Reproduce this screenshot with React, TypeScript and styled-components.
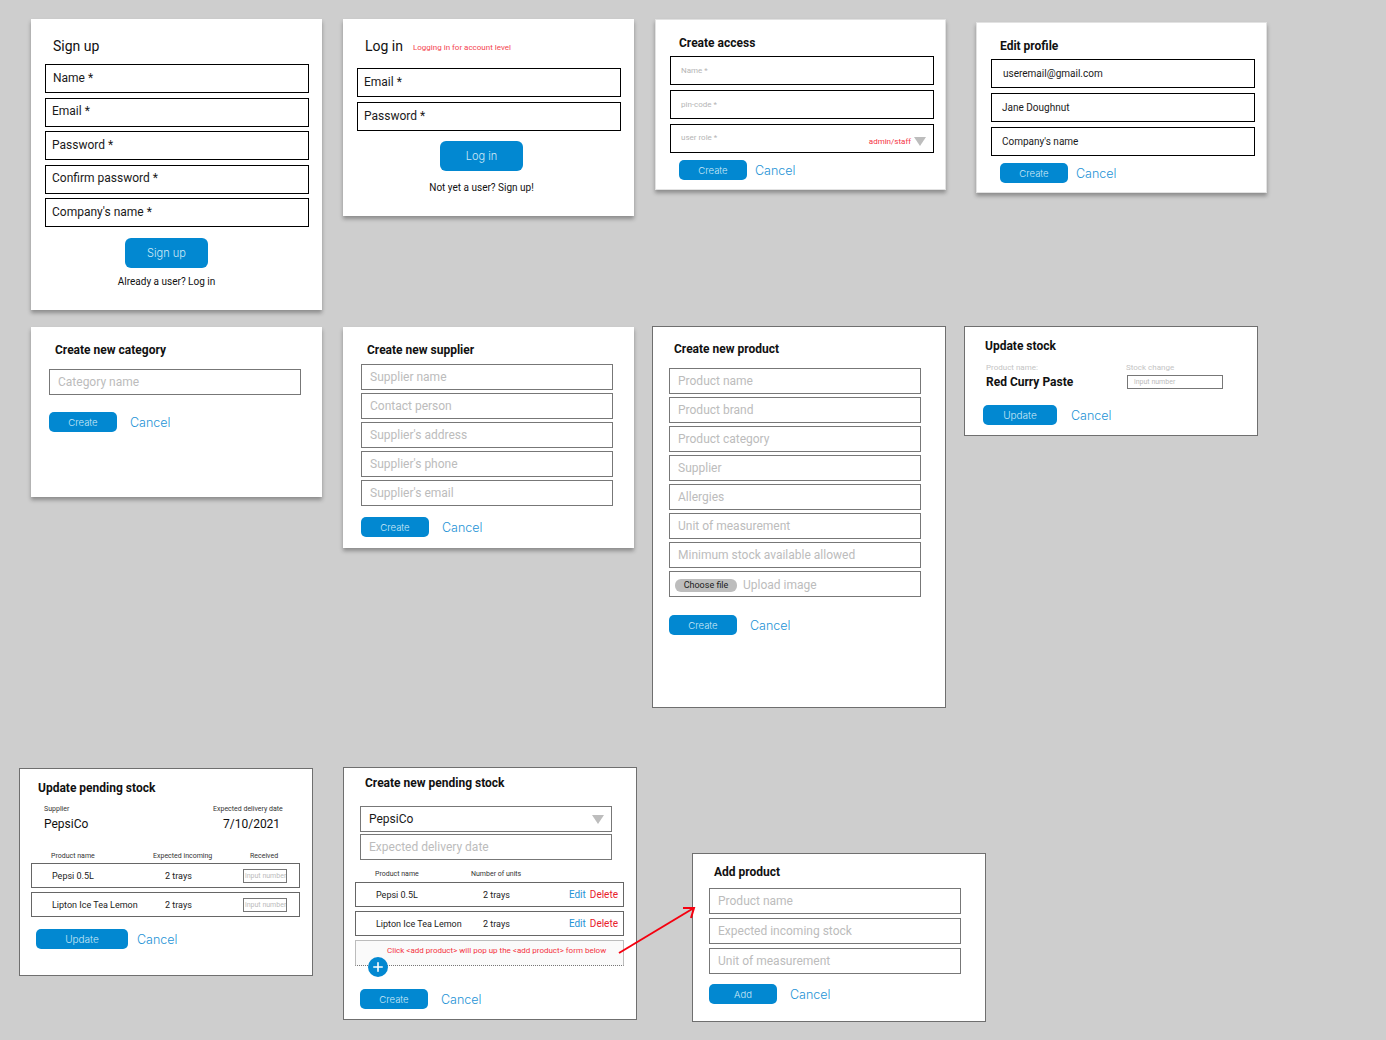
import React from "react";
import styled, { createGlobalStyle } from "styled-components";

const GlobalStyle = createGlobalStyle`
  html, body {
    margin: 0;
    padding: 0;
    background: #cecece;
    font-family: "Roboto", "Liberation Sans", sans-serif;
  }
`;

const Canvas = styled.div`
  position: relative;
  width: 1386px;
  height: 1040px;
  overflow: hidden;
  background: #cecece;
`;

// each card sits on the free wireframe canvas, content inside is plain flow
const Card = styled.section<{
  $x: number;
  $y: number;
  $w: number;
  $h: number;
  $px: number;
  $pt: number;
  $look?: "raised" | "soft" | "flat";
}>`
  position: absolute;
  left: ${(p) => p.$x}px;
  top: ${(p) => p.$y}px;
  width: ${(p) => p.$w}px;
  height: ${(p) => p.$h}px;
  box-sizing: border-box;
  padding: ${(p) => p.$pt}px 0 0 ${(p) => p.$px}px;
  background: #fff;
  display: flex;
  flex-direction: column;
  border: ${(p) =>
    p.$look === "flat" ? "1px solid #6f6f6f" : p.$look === "soft" ? "1px solid #e2e2e2" : "none"};
  box-shadow: ${(p) => (p.$look === "flat" ? "none" : "0 3px 4px rgba(0, 0, 0, 0.32)")};
`;

const TitleRow = styled.div`
  display: flex;
  align-items: baseline;
  gap: 10px;
`;

const Title = styled.h2<{ $ml: number; $big?: boolean }>`
  margin: 0 0 0 ${(p) => p.$ml}px;
  font-size: ${(p) => (p.$big ? "14px" : "12px")};
  font-weight: ${(p) => (p.$big ? 400 : 700)};
  line-height: 16px;
  color: #111;
  white-space: nowrap;
`;

const RedNote = styled.span`
  position: relative;
  top: -1px;
  font-size: 8px;
  color: #f4444f;
`;

const FieldStack = styled.div<{ $mt: number; $gap: number; $w: number; $ml?: number }>`
  display: flex;
  flex-direction: column;
  gap: ${(p) => p.$gap}px;
  width: ${(p) => p.$w}px;
  margin: ${(p) => p.$mt}px 0 0 ${(p) => p.$ml ?? 0}px;
`;

const Field = styled.div<{
  $h?: number;
  $pl?: number;
  $size?: number;
  $tone?: "ink" | "dim" | "faint" | "select";
}>`
  box-sizing: border-box;
  height: ${(p) => p.$h ?? 26}px;
  display: flex;
  align-items: center;
  padding: 0 7px ${(p) => (p.$tone ? 0 : 2)}px ${(p) => p.$pl ?? 8}px;
  background: #fff;
  border: 1px solid ${(p) => (p.$tone === "dim" || p.$tone === "select" ? "#777" : "#000")};
  font-size: ${(p) => p.$size ?? 12}px;
  color: ${(p) => (p.$tone === "dim" ? "#bcbcbc" : p.$tone === "faint" ? "#b5b5b5" : "#1a1a1a")};
  white-space: nowrap;
`;

const ProfileField = styled(Field)`
  padding-bottom: 0;
`;

const FileField = styled(Field)`
  padding-top: 2px;
`;

const RoleField = styled(Field)`
  justify-content: space-between;
`;

const RoleText = styled.span`
  margin-top: -2px;
`;

const RoleChoice = styled.span`
  display: flex;
  align-items: center;
  gap: 3px;
  font-size: 8px;
  color: #f4333f;
  margin-top: 6px;
`;

const Caret = styled.svg`
  display: block;
  width: 12px;
  height: 9px;
  fill: #bdbdbd;
`;

const ChooseFile = styled.span`
  display: inline-flex;
  align-items: center;
  justify-content: center;
  width: 62px;
  height: 13px;
  margin-right: 6px;
  border-radius: 6px;
  background: #bdbdbd;
  font-size: 9px;
  color: #1c1c1c;
`;

const Actions = styled.div<{ $mt: number; $ml?: number; $gap: number }>`
  display: flex;
  align-items: center;
  gap: ${(p) => p.$gap}px;
  margin: ${(p) => p.$mt}px 0 0 ${(p) => p.$ml ?? 0}px;
`;

const PrimaryButton = styled.button<{ $w: number; $h?: number; $size?: number }>`
  box-sizing: border-box;
  width: ${(p) => p.$w}px;
  height: ${(p) => p.$h ?? 20}px;
  padding: 0;
  border: 0;
  border-radius: ${(p) => (p.$h ? 6 : 5)}px;
  background: #0288d1;
  color: #cde8f7;
  font-family: "Inter", "Liberation Sans", sans-serif;
  font-size: ${(p) => p.$size ?? 9.5}px;
  font-weight: 300;
`;

const CancelLink = styled.a`
  margin-top: 1px;
  font-family: "Inter", "Liberation Sans", sans-serif;
  font-size: 12.5px;
  font-weight: 300;
  color: #1e93d6;
`;

const CenterBlock = styled.div<{ $mt: number; $ml: number; $gap: number }>`
  width: 83px;
  margin: ${(p) => p.$mt}px 0 0 ${(p) => p.$ml}px;
  display: flex;
  flex-direction: column;
  align-items: center;
  gap: ${(p) => p.$gap}px;
`;

const Hint = styled.p`
  margin: 0;
  font-size: 10px;
  line-height: 12px;
  color: #111;
  white-space: nowrap;
`;

const MetaRow = styled.div<{ $mt: number; $ml: number; $first: number }>`
  display: grid;
  grid-template-columns: ${(p) => p.$first}px 1fr;
  margin: ${(p) => p.$mt}px 0 0 ${(p) => p.$ml}px;
`;

const MetaLabel = styled.div<{ $faint?: boolean }>`
  font-size: ${(p) => (p.$faint ? 8 : 7)}px;
  line-height: 9px;
  color: ${(p) => (p.$faint ? "#c4c4c4" : "#333")};
  white-space: nowrap;
`;

const MetaValue = styled.div<{ $ml?: number; $mt: number; $strong?: boolean }>`
  margin: ${(p) => p.$mt}px 0 0 ${(p) => p.$ml ?? 0}px;
  font-size: 12px;
  line-height: 16px;
  font-weight: ${(p) => (p.$strong ? 700 : 400)};
  color: #111;
  white-space: nowrap;
`;

const NumberBox = styled.div<{ $w: number; $h: number; $size: number; $pl: number }>`
  box-sizing: border-box;
  width: ${(p) => p.$w}px;
  height: ${(p) => p.$h}px;
  padding-left: ${(p) => p.$pl}px;
  display: flex;
  align-items: center;
  border: 1px solid #777;
  font-size: ${(p) => p.$size}px;
  color: #bbb;
  white-space: nowrap;
  overflow: hidden;
`;

const StockInput = styled(NumberBox)`
  margin: 3px 0 0 1px;
`;

const TableHead = styled.div<{ $cols: string; $mt: number; $pl: number }>`
  display: grid;
  grid-template-columns: ${(p) => p.$cols};
  margin-top: ${(p) => p.$mt}px;
  padding-left: ${(p) => p.$pl}px;
  font-size: 7px;
  line-height: 9px;
  color: #333;
  white-space: nowrap;
`;

const RowStack = styled.div<{ $mt: number }>`
  display: flex;
  flex-direction: column;
  gap: 4px;
  width: 269px;
  margin-top: ${(p) => p.$mt}px;
`;

const TableRow = styled.div<{ $cols: string }>`
  box-sizing: border-box;
  height: 25px;
  display: grid;
  grid-template-columns: ${(p) => p.$cols};
  align-items: center;
  padding-left: 20px;
  background: #fff;
  border: 1px solid #666;
  font-size: 9px;
  color: #222;
  white-space: nowrap;
`;

const RowLinks = styled.div`
  display: flex;
  justify-content: flex-end;
  gap: 4px;
  padding-right: 5px;
  font-size: 10px;
`;

const EditLink = styled.a`
  color: #1e93d6;
`;

const DeleteLink = styled.a`
  color: #e8202c;
`;

const AddBox = styled.div`
  position: relative;
  box-sizing: border-box;
  width: 269px;
  height: 26px;
  margin-top: 4px;
  padding: 5px 0 0 31px;
  background: #fafafa;
  border: 1px solid #bcbcbc;
  border-bottom-style: dotted;
  border-bottom-color: #777;
  font-size: 8px;
  color: #f4333f;
  white-space: nowrap;
`;

const AddButton = styled.span`
  position: absolute;
  left: 12px;
  top: 16px;
  width: 20px;
  height: 20px;
  border-radius: 50%;
  background: #0288d1;
  display: flex;
  align-items: center;
  justify-content: center;
`;

const PlusIcon = styled.svg`
  width: 10px;
  height: 10px;
  stroke: #fff;
  stroke-width: 1.6;
  stroke-linecap: round;
`;

const ArrowLayer = styled.svg`
  position: absolute;
  left: 0;
  top: 0;
  width: 1386px;
  height: 1040px;
  pointer-events: none;
`;

const CaretIcon = () => (
  <Caret viewBox="0 0 12 9">
    <polygon points="0,0 12,0 6,9" />
  </Caret>
);

const FormActions = ({
  label,
  w,
  mt,
  ml,
  gap,
  size,
}: {
  label: string;
  w: number;
  mt: number;
  ml?: number;
  gap: number;
  size?: number;
}) => (
  <Actions $mt={mt} $ml={ml} $gap={gap}>
    <PrimaryButton $w={w} $size={size}>{label}</PrimaryButton>
    <CancelLink>Cancel</CancelLink>
  </Actions>
);

const supplierFields = ["Supplier name", "Contact person", "Supplier's address", "Supplier's phone", "Supplier's email"];

const productFields = [
  "Product name",
  "Product brand",
  "Product category",
  "Supplier",
  "Allergies",
  "Unit of measurement",
  "Minimum stock available allowed",
];

const stockRows = ["Pepsi 0.5L", "Lipton Ice Tea Lemon"];

export default function App() {
  return (
    <Canvas>
      <GlobalStyle />

      <Card $x={31} $y={19} $w={291} $h={291} $px={14} $pt={19}>
        <Title $big $ml={8}>Sign up</Title>
        <FieldStack $mt={10} $gap={4.5} $w={264}>
          <Field $h={29} $pl={7}>Name *</Field>
          {["Email *", "Password *", "Confirm password *", "Company's name *"].map((t) => (
            <Field key={t} $h={29} $pl={6}>{t}</Field>
          ))}
        </FieldStack>
        <CenterBlock $mt={11} $ml={80} $gap={8}>
          <PrimaryButton $w={83} $h={30} $size={11}>Sign up</PrimaryButton>
          <Hint>Already a user? Log in</Hint>
        </CenterBlock>
      </Card>

      <Card $x={343} $y={19} $w={291} $h={197} $px={14} $pt={19}>
        <TitleRow>
          <Title $big $ml={8}>Log in</Title>
          <RedNote>Logging in for account level</RedNote>
        </TitleRow>
        <FieldStack $mt={14} $gap={5} $w={264}>
          <Field $h={29} $pl={6}>Email *</Field>
          <Field $h={29} $pl={6}>Password *</Field>
        </FieldStack>
        <CenterBlock $mt={10} $ml={83} $gap={11}>
          <PrimaryButton $w={83} $h={30} $size={11}>Log in</PrimaryButton>
          <Hint>Not yet a user? Sign up!</Hint>
        </CenterBlock>
      </Card>

      <Card $x={655} $y={19} $w={291} $h={171} $px={14} $pt={15} $look="soft">
        <Title $ml={9}>Create access</Title>
        <FieldStack $mt={5} $gap={5} $w={264}>
          <Field $h={29} $pl={10} $size={8} $tone="faint">Name *</Field>
          <Field $h={29} $pl={10} $size={8} $tone="faint">pin-code *</Field>
          <RoleField $h={29} $pl={10} $size={8} $tone="faint">
            <RoleText>user role *</RoleText>
            <RoleChoice>admin/staff<CaretIcon /></RoleChoice>
          </RoleField>
        </FieldStack>
        <FormActions label="Create" w={68} mt={7} ml={9} gap={8} />
      </Card>

      <Card $x={976} $y={22} $w={291} $h={171} $px={14} $pt={15} $look="soft">
        <Title $ml={9}>Edit profile</Title>
        <FieldStack $mt={5} $gap={5} $w={264}>
          <ProfileField $h={29} $pl={11} $size={10}>useremail@gmail.com</ProfileField>
          <ProfileField $h={29} $pl={10} $size={10}>Jane Doughnut</ProfileField>
          <ProfileField $h={29} $pl={10} $size={10}>Company's name</ProfileField>
        </FieldStack>
        <FormActions label="Create" w={68} mt={7} ml={9} gap={8} />
      </Card>

      <Card $x={31} $y={327} $w={291} $h={170} $px={18} $pt={15}>
        <Title $ml={6}>Create new category</Title>
        <FieldStack $mt={11} $gap={3} $w={252}>
          <Field $tone="dim">Category name</Field>
        </FieldStack>
        <FormActions label="Create" w={68} mt={17} gap={13} />
      </Card>

      <Card $x={343} $y={327} $w={291} $h={221} $px={18} $pt={15}>
        <Title $ml={6}>Create new supplier</Title>
        <FieldStack $mt={6} $gap={3} $w={252}>
          {supplierFields.map((t) => (
            <Field key={t} $tone="dim">{t}</Field>
          ))}
        </FieldStack>
        <FormActions label="Create" w={68} mt={11} gap={13} />
      </Card>

      <Card $x={652} $y={326} $w={294} $h={382} $px={16} $pt={14} $look="flat">
        <Title $ml={5}>Create new product</Title>
        <FieldStack $mt={11} $gap={3} $w={252}>
          {productFields.map((t) => (
            <Field key={t} $tone="dim">{t}</Field>
          ))}
          <FileField $tone="dim" $pl={5}>
            <ChooseFile>Choose file</ChooseFile>
            Upload image
          </FileField>
        </FieldStack>
        <FormActions label="Create" w={68} mt={18} gap={13} />
      </Card>

      <Card $x={964} $y={326} $w={294} $h={110} $px={18} $pt={11} $look="flat">
        <Title $ml={2}>Update stock</Title>
        <MetaRow $mt={9} $ml={3} $first={140}>
          <div>
            <MetaLabel $faint>Product name:</MetaLabel>
            <MetaValue $strong $mt={2}>Red Curry Paste</MetaValue>
          </div>
          <div>
            <MetaLabel $faint>Stock change</MetaLabel>
            <StockInput $w={96} $h={14} $size={7} $pl={6}>input number</StockInput>
          </div>
        </MetaRow>
        <FormActions label="Update" w={74} mt={15} gap={14} size={10} />
      </Card>

      <Card $x={19} $y={768} $w={294} $h={208} $px={11} $pt={11} $look="flat">
        <Title $ml={7}>Update pending stock</Title>
        <MetaRow $mt={9} $ml={13} $first={169}>
          <div>
            <MetaLabel>Supplier</MetaLabel>
            <MetaValue $mt={2}>PepsiCo</MetaValue>
          </div>
          <div>
            <MetaLabel>Expected delivery date</MetaLabel>
            <MetaValue $mt={2} $ml={10}>7/10/2021</MetaValue>
          </div>
        </MetaRow>
        <TableHead $cols="102px 97px 1fr" $mt={20} $pl={20}>
          <span>Product name</span>
          <span>Expected incoming</span>
          <span>Received</span>
        </TableHead>
        <RowStack $mt={2}>
          {stockRows.map((name) => (
            <TableRow key={name} $cols="113px 78px 1fr">
              <span>{name}</span>
              <span>2 trays</span>
              <NumberBox $w={44} $h={14} $size={7} $pl={1}>input number</NumberBox>
            </TableRow>
          ))}
        </RowStack>
        <FormActions label="Update" w={92} mt={12} ml={5} gap={9} size={10} />
      </Card>

      <Card $x={343} $y={767} $w={294} $h={253} $px={11} $pt={7} $look="flat">
        <Title $ml={10}>Create new pending stock</Title>
        <FieldStack $mt={15} $gap={2} $w={252} $ml={5}>
          <RoleField $tone="select">
            PepsiCo
            <CaretIcon />
          </RoleField>
          <Field $tone="dim">Expected delivery date</Field>
        </FieldStack>
        <TableHead $cols="96px 1fr" $mt={10} $pl={20}>
          <span>Product name</span>
          <span>Number of units</span>
        </TableHead>
        <RowStack $mt={3}>
          {stockRows.map((name) => (
            <TableRow key={name} $cols="107px 60px 1fr">
              <span>{name}</span>
              <span>2 trays</span>
              <RowLinks>
                <EditLink>Edit</EditLink>
                <DeleteLink>Delete</DeleteLink>
              </RowLinks>
            </TableRow>
          ))}
        </RowStack>
        <AddBox>
          {"Click <add product> will pop up the <add product> form below"}
          <AddButton>
            <PlusIcon viewBox="0 0 10 10">
              <line x1="5" y1="0.8" x2="5" y2="9.2" />
              <line x1="0.8" y1="5" x2="9.2" y2="5" />
            </PlusIcon>
          </AddButton>
        </AddBox>
        <FormActions label="Create" w={68} mt={23} ml={5} gap={13} />
      </Card>

      <Card $x={692} $y={853} $w={294} $h={169} $px={16} $pt={10} $look="flat">
        <Title $ml={5}>Add product</Title>
        <FieldStack $mt={8} $gap={4} $w={252}>
          {["Product name", "Expected incoming stock", "Unit of measurement"].map((t) => (
            <Field key={t} $tone="dim">{t}</Field>
          ))}
        </FieldStack>
        <FormActions label="Add" w={68} mt={10} gap={13} />
      </Card>

      <ArrowLayer viewBox="0 0 1386 1040">
        <g fill="none" stroke="#f5000f" strokeWidth="2">
          <line x1="619" y1="953" x2="693" y2="908.5" />
          <polyline points="683,908 694,908 691,918" />
        </g>
      </ArrowLayer>
    </Canvas>
  );
}
